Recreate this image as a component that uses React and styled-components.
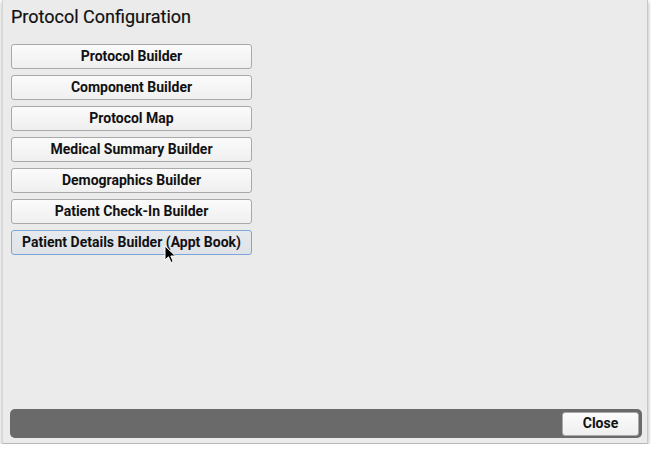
import React from "react"
import styled, { createGlobalStyle } from "styled-components"

const Global = createGlobalStyle`
  html, body { margin: 0; padding: 0; background: #ffffff; }
  body { font-family: Roboto, "Liberation Sans", Arial, sans-serif; }
`

const Window = styled.div`
  position: relative;
  box-sizing: border-box;
  margin-left: 2px;
  width: 646px;
  height: 444px;
  background: #ebebeb;
  border-left: 1px solid #d6d6d6;
  border-right: 1px solid #c8c8c8;
  border-bottom: 1px solid #b8b8b8;
  box-shadow: 0 2px 4px rgba(0, 0, 0, 0.35);
  display: flex;
  flex-direction: column;
  padding: 0 5px 5px 8px;
`

const Title = styled.h1`
  margin: 6px 0 0 0;
  font-size: 18px;
  font-weight: 400;
  color: #111;
  line-height: 21px;
  -webkit-text-stroke: 0.2px #111;
`

const List = styled.div`
  display: flex;
  flex-direction: column;
  gap: 6px;
  margin-top: 17px;
  width: 241px;
`

const Button = styled.button`
  box-sizing: border-box;
  height: 25px;
  width: 100%;
  border-radius: 3px;
  border: 1px solid ${p => (p.$hover ? "#7ca6d8" : "#a9a9a9")};
  background: ${p =>
    p.$hover
      ? "linear-gradient(#e6eaef, #dfe3e8)"
      : "linear-gradient(#fbfbfb, #efefef)"};
  font-family: Roboto, "Liberation Sans", Arial, sans-serif;
  font-weight: 700;
  font-size: 14px;
  color: #111;
  padding: 0 0 2px 0;
  cursor: default;
`

const Spacer = styled.div`
  flex: 1;
`

const Footer = styled.div`
  box-sizing: border-box;
  height: 29px;
  background: #6a6a6a;
  border-radius: 5px;
  display: flex;
  justify-content: flex-end;
  align-items: center;
  padding-right: 3px;
  margin-left: -1px;
`

const CloseButton = styled(Button)`
  width: 77px;
  height: 24px;
  font-size: 14px;
`

const Cursor = styled.svg`
  position: absolute;
  left: 161px;
  top: 245px;
`

const items = [
  "Protocol Builder",
  "Component Builder",
  "Protocol Map",
  "Medical Summary Builder",
  "Demographics Builder",
  "Patient Check-In Builder",
  "Patient Details Builder (Appt Book)",
]

export default function App() {
  return (
    <>
      <Global />
      <Window>
        <Title>Protocol Configuration</Title>
        <List>
          {items.map((t, i) => (
            <Button key={t} $hover={i === items.length - 1}>
              {t}
            </Button>
          ))}
        </List>
        <Spacer />
        <Footer>
          <CloseButton>Close</CloseButton>
        </Footer>
        <Cursor width="14" height="20" viewBox="0 0 14 20">
          <path
            d="M1 1 L1 15 L4.5 11.8 L7 17.5 L9.2 16.5 L6.8 11 L11.5 11 Z"
            fill="#000"
            stroke="#fff"
            strokeWidth="1"
          />
        </Cursor>
      </Window>
    </>
  )
}
